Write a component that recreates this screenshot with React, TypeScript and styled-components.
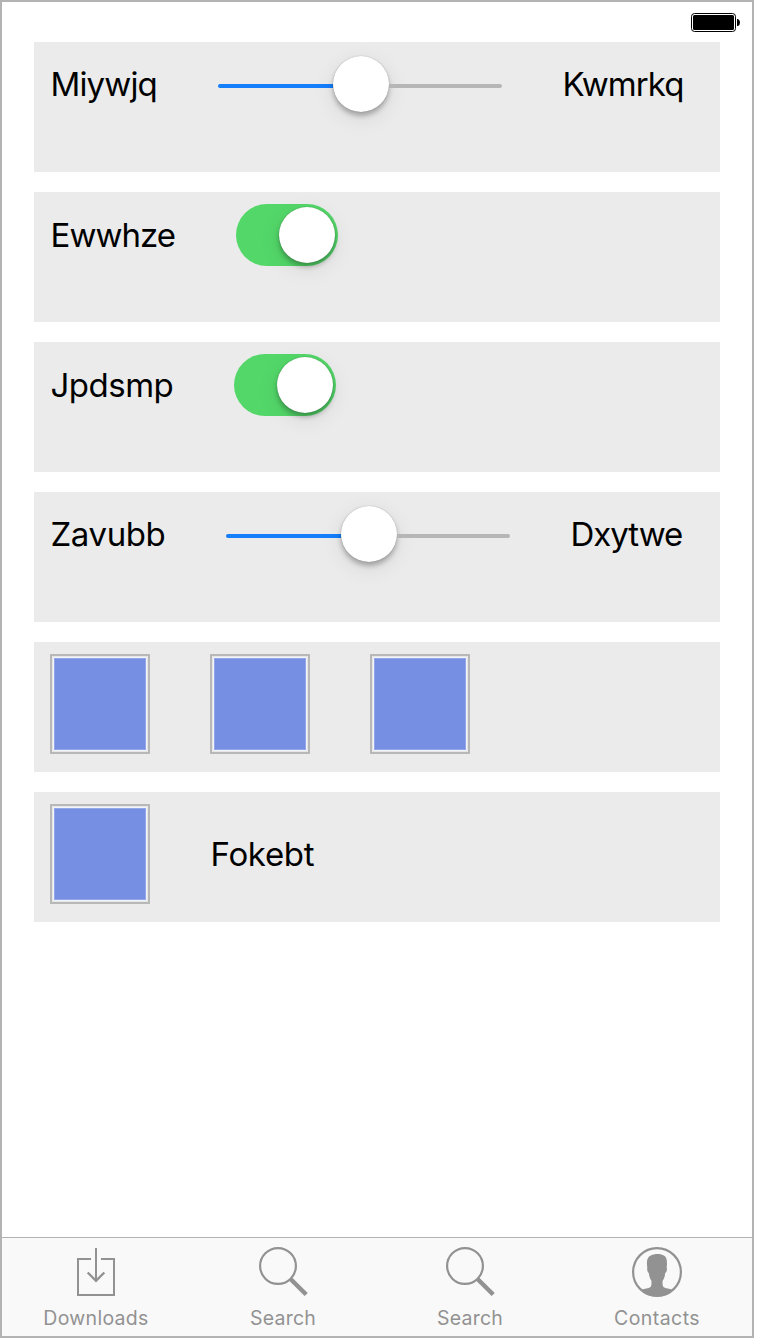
import React from "react";
import styled, { createGlobalStyle } from "styled-components";

const GlobalStyle = createGlobalStyle`
  * { box-sizing: border-box; }
  body { margin: 0; background: #fff; }
`;

const Screen = styled.div`
  display: flex;
  flex-direction: column;
  width: 754px;
  height: 1338px;
  border: 2px solid #b3b3b3;
  background: #fff;
  font-family: Inter, "Liberation Sans", sans-serif;
`;

const StatusBar = styled.header`
  display: flex;
  justify-content: flex-end;
  height: 40px;
  padding: 11px 12px 0 0;
`;

const Content = styled.main`
  flex: 1;
  display: flex;
  flex-direction: column;
  gap: 20px;
  padding: 0 32px;
`;

const Row = styled.section`
  display: flex;
  align-items: flex-start;
  height: 130px;
  padding: 12px 16px;
  background: #ebebeb;
`;

const Controls = styled.div<{ $height: number }>`
  display: flex;
  align-items: center;
  gap: 60px;
  height: ${(p) => p.$height}px;
`;

const Label = styled.span<{ $width: number; $spacing?: number }>`
  width: ${(p) => p.$width}px;
  padding-left: 0.5px;
  font-size: 33px;
  line-height: 40px;
  letter-spacing: ${(p) => p.$spacing ?? 0}px;
  white-space: nowrap;
  color: #000;
`;

const Knob = styled.div`
  width: 56px;
  height: 56px;
  flex: none;
  border-radius: 50%;
  background: #fff;
  box-shadow: 0 0 1px rgba(0, 0, 0, 0.35), 0 4px 5px rgba(0, 0, 0, 0.26),
    0 6px 22px rgba(0, 0, 0, 0.09);
`;

const SliderBox = styled.div`
  display: flex;
  align-items: center;
  width: 284px;
  height: 60px;
`;

const Track = styled.div<{ $filled?: boolean }>`
  width: ${(p) => (p.$filled ? 115 : 113)}px;
  height: 4px;
  margin-top: 4px;
  border-radius: ${(p) => (p.$filled ? "2px 0 0 2px" : "0 2px 2px 0")};
  background: ${(p) => (p.$filled ? "#157efb" : "#b6b6b6")};
`;

const Switch = styled.div`
  display: flex;
  align-items: center;
  justify-content: flex-end;
  width: 102px;
  height: 62px;
  padding: 3px;
  border-radius: 31px;
  background: #53d769;
`;

const Swatch = styled.div`
  width: 100px;
  height: 100px;
  padding: 1px;
  border: 2px solid #b8b8b8;
  background: #e6e6e5;
`;

const SwatchFill = styled.div`
  width: 94px;
  height: 94px;
  border: 1px solid #f1f4fc;
  background: #768fe2;
  box-shadow: inset 0 0 0 1px #93a6e9;
`;

const TabBar = styled.nav`
  display: flex;
  height: 99px;
  padding-left: 0.5px;
  border-top: 1px solid #b2b2b2;
  background: #f9f9f9;
`;

const Tab = styled.div`
  display: flex;
  flex-direction: column;
  align-items: center;
  width: 187px;
  padding-top: 9px;
  color: #929292;
`;

const TabLabel = styled.span<{ $spacing: number }>`
  margin-top: 9px;
  font-size: 19.5px;
  line-height: 24px;
  letter-spacing: ${(p) => p.$spacing}px;
`;

const Battery = () => (
  <svg width="49" height="19" viewBox="0 0 49 19">
    <rect x="0.5" y="0.5" width="44" height="18" rx="3" fill="none" stroke="#000" />
    <rect x="2" y="2" width="41" height="15" rx="1.5" fill="#000" />
    <path d="M46 6h1q2 1 2 3.5T47 13h-1z" fill="#000" />
  </svg>
);

const DownloadIcon = () => (
  <svg width="50" height="50" viewBox="0 0 50 50" fill="none" stroke="currentColor" strokeWidth="2">
    <path d="M20 12H7v36h36V12H30M25 1v33" />
    <path d="M16.700 25.500l8.300 8.300 8.300-8.300" strokeWidth="2.400" />
  </svg>
);

const SearchIcon = () => (
  <svg width="50" height="50" viewBox="0 0 50 50" fill="none" stroke="currentColor">
    <circle cx="20" cy="19" r="17.9" strokeWidth="2.2" />
    <path d="M32.500 32l15.700 15.500" strokeWidth="4.500" />
  </svg>
);

const ContactIcon = () => (
  <svg width="50" height="50" viewBox="0 0 50 50">
    <circle cx="25" cy="25" r="23.9" fill="none" stroke="currentColor" strokeWidth="2.2" />
    <path
      d="M9.500 43c3-1.500 7-1.500 9-3 1-1 1-3 1-6-1.500-2.500-2.200-4.500-2.700-8-1.300-.5-2-4-1.500-5.500-1-7 0-10.500 3.500-12 4-2 9-2 12.500-.2 3.500 1.200 4.200 5.500 3.400 12.200.7 1.500 0 5-1.500 5.500-.4 3.500-1 5.500-2.700 8 0 3 0 5 1 6 2 1.500 6 1.500 9 3C36.500 51.500 15 52 9.500 43z"
      fill="currentColor"
    />
  </svg>
);

const Slider = () => (
  <SliderBox>
    <Track $filled />
    <Knob />
    <Track />
  </SliderBox>
);

const Toggle = () => (
  <Switch>
    <Knob />
  </Switch>
);

const ColorSwatch = () => (
  <Swatch>
    <SwatchFill />
  </Swatch>
);

const tabs = [
  { label: "Downloads", Icon: DownloadIcon, spacing: 0.3 },
  { label: "Search", Icon: SearchIcon, spacing: 0.25 },
  { label: "Search", Icon: SearchIcon, spacing: 0.25 },
  { label: "Contacts", Icon: ContactIcon, spacing: 0.45 },
];

export default function App() {
  return (
    <>
      <GlobalStyle />
      <Screen>
        <StatusBar>
          <Battery />
        </StatusBar>
        <Content>
          <Row>
            <Controls $height={60}>
              <Label $width={108} $spacing={-0.85}>Miywjq</Label>
              <Slider />
              <Label $width={122} $spacing={-0.9}>Kwmrkq</Label>
            </Controls>
          </Row>
          <Row>
            <Controls $height={62}>
              <Label $width={126} $spacing={-0.95}>Ewwhze</Label>
              <Toggle />
            </Controls>
          </Row>
          <Row>
            <Controls $height={62}>
              <Label $width={124} $spacing={-0.5}>Jpdsmp</Label>
              <Toggle />
            </Controls>
          </Row>
          <Row>
            <Controls $height={60}>
              <Label $width={116} $spacing={-0.4}>Zavubb</Label>
              <Slider />
              <Label $width={112} $spacing={-1}>Dxytwe</Label>
            </Controls>
          </Row>
          <Row>
            <Controls $height={100}>
              <ColorSwatch />
              <ColorSwatch />
              <ColorSwatch />
            </Controls>
          </Row>
          <Row>
            <Controls $height={100}>
              <ColorSwatch />
              <Label $width={105} $spacing={-0.3}>Fokebt</Label>
            </Controls>
          </Row>
        </Content>
        <TabBar>
          {tabs.map(({ label, Icon, spacing }, i) => (
            <Tab key={i}>
              <Icon />
              <TabLabel $spacing={spacing}>{label}</TabLabel>
            </Tab>
          ))}
        </TabBar>
      </Screen>
    </>
  );
}
